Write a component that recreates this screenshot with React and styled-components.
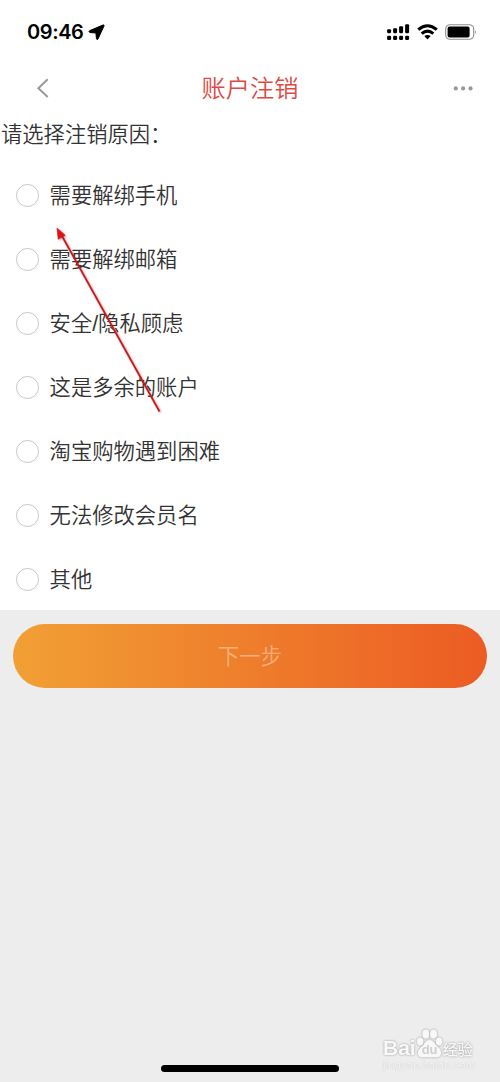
import React, { useState } from "react";
import styled, { createGlobalStyle } from "styled-components";

const GlobalStyle = createGlobalStyle`
  * {
    box-sizing: border-box;
  }

  body {
    margin: 0;
    background: #ededed;
    font-family: "Noto Sans CJK SC", sans-serif;
    font-weight: 350;
  }
`;

const Page = styled.div`
  position: relative;
  display: flex;
  flex-direction: column;
  width: 500px;
  height: 1082px;
  overflow: hidden;
  background: #ededed;
`;

const StatusBar = styled.div`
  display: flex;
  justify-content: space-between;
  align-items: center;
  height: 64px;
  padding: 0 23px 0 27px;
  background: #ffffff;
`;

const StatusGroup = styled.div`
  display: flex;
  align-items: center;
  gap: ${(props) => props.$gap};
`;

const Time = styled.span`
  font-family: Inter, sans-serif;
  font-size: 20px;
  font-weight: 600;
  letter-spacing: -0.4px;
  line-height: 24px;
  color: #000000;
`;

const Navbar = styled.div`
  display: grid;
  grid-template-columns: 86px 1fr 86px;
  align-items: center;
  height: 48px;
  background: #ffffff;
`;

const NavButton = styled.button`
  display: flex;
  justify-content: ${(props) => props.$align};
  padding: ${(props) => props.$padding};
  border: none;
  outline: none;
  background: transparent;
`;

const Title = styled.h1`
  margin: 0;
  padding-bottom: 2px;
  font-size: 24.2px;
  font-weight: 350;
  line-height: 46px;
  text-align: center;
  color: #dd4a45;
`;

const Prompt = styled.p`
  height: 51px;
  margin: 0;
  padding-left: 1px;
  font-size: 21.3px;
  line-height: 41px;
  color: #333333;
  background: #ffffff;
`;

const ReasonList = styled.div`
  height: 447px;
  background: #ffffff;
`;

const Reason = styled.label`
  display: flex;
  align-items: center;
  height: 64px;
  padding-left: 16px;
  font-family: "Liberation Sans", "Noto Sans CJK SC", sans-serif;
  font-size: 21.3px;
  line-height: 32px;
  color: #333333;
`;

const ReasonText = styled.span`
  padding-top: 2px;
`;

const Radio = styled.input`
  appearance: none;
  width: 23px;
  height: 23px;
  margin: 0 10.6px 0 0;
  border: 1.4px solid #c8c8c8;
  border-radius: 50%;
  background: #ffffff;

  &:checked {
    border: 7px solid #ee5c22;
  }
`;

const NextButton = styled.button`
  height: 64px;
  margin: 14px 13px 0;
  padding: 0 0 2px;
  border: none;
  border-radius: 32px;
  outline: none;
  font-family: inherit;
  font-size: 21.3px;
  font-weight: 350;
  line-height: 62px;
  color: rgba(255, 255, 255, 0.4);
  background: linear-gradient(90deg, #f1a035, #ec5b23);
`;

const HomeIndicator = styled.div`
  width: 178px;
  height: 7px;
  margin: auto auto 10px 161px;
  border-radius: 4px;
  background: #000000;
`;

const Arrow = styled.svg`
  position: absolute;
  left: 50px;
  top: 220px;
  pointer-events: none;
  filter: drop-shadow(1px 1px 1px rgba(0, 0, 0, 0.35));
`;

const Watermark = styled.div`
  position: absolute;
  left: 383px;
  top: 1025px;
  width: 94px;
  color: #f8f8f8;
`;

const WatermarkLogo = styled.div`
  display: flex;
  align-items: flex-end;
  height: 33px;
  filter: drop-shadow(0 0 0.8px #999999);
`;

const Bai = styled.span`
  font-family: "Liberation Sans", sans-serif;
  font-size: 21px;
  font-weight: 700;
  line-height: 20px;
`;

const Jingyan = styled.span`
  font-size: 15px;
  font-weight: 500;
  line-height: 19px;
`;

const Site = styled.div`
  font-family: "Liberation Sans", sans-serif;
  font-size: 11px;
  font-weight: 400;
  line-height: 14px;
  letter-spacing: 0.2px;
  color: #f8f8f8;
  text-shadow: 0 0 1px #b4b4b4;
`;

const reasons = [
  "需要解绑手机",
  "需要解绑邮箱",
  "安全/隐私顾虑",
  "这是多余的账户",
  "淘宝购物遇到困难",
  "无法修改会员名",
  "其他",
];

const signalBars = [
  [0, 5, 4],
  [6, 4, 5],
  [12, 2, 7],
  [18, 0, 9],
];

const LocationIcon = () => (
  <svg width="17" height="17" viewBox="0 0 17 17">
    <path
      d="M15 1 1.8 6.6Q0.2 7.8 1.8 8.5L7.9 9 8.5 14.8Q9 16.4 10 14.9L16 2Q16.4 0.5 15 1Z"
      stroke="#000"
      strokeWidth="1"
    />
  </svg>
);

const SignalIcon = () => (
  <svg width="23" height="17" viewBox="0 0 23 17">
    {signalBars.map(([x, y, h]) => (
      <g key={x}>
        <rect x={x + 0.1} y={y + 0.2} width="4" height={h} rx="1.1" />
        <rect x={x + 0.1} y="11.8" width="4" height="4.2" rx="1.3" />
      </g>
    ))}
  </svg>
);

const WifiIcon = () => (
  <svg width="21" height="16" viewBox="0 0 21 16">
    <g fill="none" stroke="#000" strokeWidth="3">
      <path d="M1.2 5.7Q10.5-2.3 19.8 5.7" />
      <path d="M4.7 9.7Q10.5 4.6 16.3 9.7" />
    </g>
    <path d="M7.3 12.1Q10.5 9.7 13.7 12.1L10.5 15.4Z" />
  </svg>
);

const BatteryIcon = () => (
  <svg width="32" height="16" viewBox="0 0 32 16">
    <rect x="0.7" y="0.7" width="28" height="14.6" rx="4.3" fill="none" stroke="#8e8e8e" strokeWidth="1.1" />
    <rect x="2.6" y="2.6" width="22" height="10.8" rx="2" />
    <path d="M30 5.5Q31.8 8 30 10.5Z" fill="#8e8e8e" />
  </svg>
);

const Paw = () => (
  <svg width="27" height="30" viewBox="0 0 27 30">
    <g fill="#f8f8f8">
      <ellipse cx="4.2" cy="13.5" rx="3.2" ry="4" />
      <ellipse cx="9.8" cy="6" rx="3.5" ry="4.6" />
      <ellipse cx="17.5" cy="6" rx="3.5" ry="4.6" />
      <ellipse cx="23" cy="13.5" rx="3.2" ry="4" />
      <path d="M13.5 12Q17 12 19.5 16.5L24.3 21.3Q27 29 20.5 29.3H6.5Q0 29 2.5 22L7.7 16.5Q10 12 13.5 12Z" />
    </g>
    <text x="13.6" y="26.4" textAnchor="middle" fontFamily="Liberation Sans" fontWeight="700" fontSize="13" fill="#cfcfcf">
      du
    </text>
  </svg>
);

const App = () => {
  const [selected, setSelected] = useState("");

  return (
    <>
      <GlobalStyle />
      <Page>
        <StatusBar>
          <StatusGroup $gap="5px">
            <Time>09:46</Time>
            <LocationIcon />
          </StatusGroup>
          <StatusGroup $gap="7px">
            <SignalIcon />
            <WifiIcon />
            <BatteryIcon />
          </StatusGroup>
        </StatusBar>
        <Navbar>
          <NavButton $align="flex-start" $padding="0 0 0 36px">
            <svg width="14" height="20" viewBox="0 0 14 20">
              <path d="M11.7 1.3 2.4 10.2 11.7 19" fill="none" stroke="#999" strokeWidth="2" />
            </svg>
          </NavButton>
          <Title>账户注销</Title>
          <NavButton $align="flex-end" $padding="0 27px 0 0">
            <svg width="20" height="6" viewBox="0 0 20 6" fill="#999">
              <circle cx="2.8" cy="3.4" r="2.1" />
              <circle cx="10.1" cy="3.4" r="2.1" />
              <circle cx="17.5" cy="3.4" r="2.1" />
            </svg>
          </NavButton>
        </Navbar>
        <Prompt>请选择注销原因：</Prompt>
        <ReasonList>
          {reasons.map((reason) => (
            <Reason key={reason}>
              <Radio
                type="radio"
                name="reason"
                checked={selected === reason}
                onChange={() => setSelected(reason)}
              />
              <ReasonText>{reason}</ReasonText>
            </Reason>
          ))}
        </ReasonList>
        <NextButton disabled={!selected}>下一步</NextButton>
        <HomeIndicator />
        <Arrow width="120" height="200" viewBox="0 0 120 200">
          <path d="M109.5 191.5 12 16" stroke="#d0171b" strokeWidth="1.8" />
          <path d="M7 8 8.2 19.2 15.2 15.3Z" fill="#e60f14" stroke="#d0171b" strokeWidth="0.6" />
        </Arrow>
        <Watermark>
          <WatermarkLogo>
            <Bai>Bai</Bai>
            <Paw />
            <Jingyan>经验</Jingyan>
          </WatermarkLogo>
          <Site>jingyan.baidu.com</Site>
        </Watermark>
      </Page>
    </>
  );
};

export default App;
